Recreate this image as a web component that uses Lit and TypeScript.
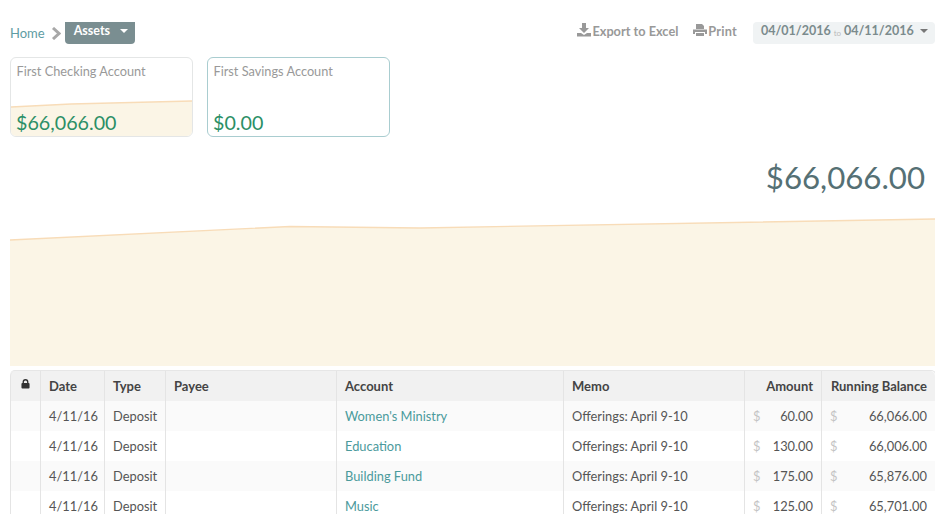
import { LitElement, html, css, svg } from "lit";
import { customElement } from "lit/decorators.js";

const rows = [
  ["Women's Ministry", "60.00", "66,066.00"],
  ["Education", "130.00", "66,006.00"],
  ["Building Fund", "175.00", "65,876.00"],
  ["Music", "125.00", "65,701.00"],
];

@customElement("app-root")
export class AppRoot extends LitElement {
  static styles = css`
    :host { display: block; height: 526px; overflow: hidden; background: #fff; font-family: Lato, "Open Sans", sans-serif; font-size: 14px; color: #555; }
    .page { padding: 22px 14px 0 10px; display: flex; flex-direction: column; }
    .top { display: flex; align-items: flex-start; justify-content: space-between; height: 35px; }
    .crumbs { display: flex; align-items: flex-start; }
    .home { color: #5e9ca3; font-size: 13px; line-height: 22px; height: 22px; display: flex; align-items: flex-end; }
    .sep { margin: 5px 4px 0 6px; }
    .assets { width: 70px; height: 22px; box-sizing: border-box; background: #7a8e91; color: #fff; font-weight: 700; font-size: 12.5px; border-radius: 0 0 4px 4px; padding: 0 0 0 9px; display: flex; align-items: flex-start; line-height: 18px; gap: 10px; }
    .caret { width: 0; height: 0; border-left: 4px solid transparent; border-right: 4px solid transparent; border-top: 4px solid currentColor; }
    .assets .caret { margin-top: 7px; }
    .tools { display: flex; align-items: flex-start; color: #999; font-weight: 700; font-size: 12.75px; line-height: 18px; }
    .tool { display: flex; align-items: flex-start; gap: 1px; }
    .tool svg { margin-top: 1px; }
    .export { margin-right: 15px; }
    .print { letter-spacing: 0.2px; }
    .dates { margin-left: 16px; width: 182px; height: 22px; box-sizing: border-box; background: #f0f3f4; color: #7b8b8d; border-radius: 4px; padding: 0 0 0 8px; display: flex; align-items: flex-start; font-size: 12.5px; }
    .to { font-size: 8px; font-weight: 400; color: #bbb; margin: 2px 3px 0; }
    .dates .caret { margin: 7px 0 0 6px; color: #777; }
    .cards { display: flex; gap: 14px; }
    .card { position: relative; width: 183px; height: 80px; box-sizing: border-box; border: 1px solid #e4e6e6; border-radius: 6px; overflow: hidden; }
    .card.sav { border-color: #a9cdd0; }
    .card svg { position: absolute; inset: 0; }
    .name { position: relative; color: #999; font-size: 12.75px; line-height: 18px; padding: 4px 0 0 5.5px; }
    .bal { position: absolute; left: 5px; bottom: 0; color: #2b8f66; font-size: 19.7px; line-height: 26px; }
    .total { text-align: right; color: #557074; font-size: 31.2px; font-weight: 400; line-height: 40px; padding: 20px 10px 0 0; height: 40px; }
    .chart { display: block; margin-top: 21px; }
    .wrap { margin-top: 4px; height: 144px; overflow: hidden; }
    table { width: 925px; box-sizing: border-box; table-layout: fixed; border-collapse: separate; border-spacing: 0; font-size: 12.85px; border-top: 1px solid #e6e6e6; border-right: 1px solid #e6e6e6; border-radius: 5px 5px 0 0; }
    th, td { height: 30px; box-sizing: border-box; padding: 0 8px; border-left: 1px solid #e4e4e4; white-space: nowrap; text-align: left; }
    th { background: #f1f1f1; color: #444; font-weight: 700; font-size: 13px; }
    th:first-child { border-top-left-radius: 5px; padding: 0; text-align: center; vertical-align: top; }
    th:last-child { border-top-right-radius: 5px; }
    tbody tr:nth-child(odd) td { background: #fafafa; }
    td { color: #555; }
    td a { color: #4b9a9c; }
    .r { text-align: right; }
    .money { display: flex; justify-content: space-between; }
    .d { color: #c4c4c4; }
    .lock { margin-top: 8px; }
  `;

  render() {
    return html`<div class="page">
      <div class="top">
        <div class="crumbs">
          <span class="home">Home</span>
          <svg class="sep" width="10" height="13" viewBox="0 0 10 13"><path d="M2 1l6 5.500L2 12" fill="none" stroke="#a8a8a8" stroke-width="3"/></svg>
          <div class="assets">Assets <span class="caret"></span></div>
        </div>
        <div class="tools">
          <span class="tool export"><svg width="14" height="14" viewBox="0 0 14 14" fill="#999"><path d="M5 0h4v5h3L7 10 2 5h3z"/><path d="M0 10h4l3 2 3-2h4v3.500H0z"/></svg>Export to Excel</span>
          <span class="tool print"><svg width="14" height="14" viewBox="0 0 14 14" fill="#999"><path d="M3 1h6l2 2v3H3z"/><path d="M0 6.500h14V11h-2V9H2v2H0z"/><path d="M3 10h8v3H3z"/></svg>Print</span>
          <div class="dates">04/01/2016<span class="to">to</span>04/11/2016<span class="caret"></span></div>
        </div>
      </div>
      <div class="cards">
        <div class="card">
          <svg width="181" height="78" viewBox="0 0 181 78" preserveAspectRatio="none">${svg`<path d="M0 49 L60 46 L181 43 V78 H0Z" fill="#fbf5e6"/><path d="M0 49 L60 46 L181 43" fill="none" stroke="#f8dcb8" stroke-width="1.300"/>`}</svg>
          <div class="name">First Checking Account</div>
          <div class="bal">$66,066.00</div>
        </div>
        <div class="card sav">
          <div class="name">First Savings Account</div>
          <div class="bal">$0.00</div>
        </div>
      </div>
      <div class="total">$66,066.00</div>
      <svg class="chart" width="925" height="148" viewBox="0 0 925 148">${svg`<path d="M0 22 L280 8.500 L410 10 L925 1 V148 H0Z" fill="#fbf5e6"/><path d="M0 22 L280 8.500 L410 10 L925 1" fill="none" stroke="#f8dcb8" stroke-width="1.300"/>`}</svg>
      <div class="wrap">
        <table>
          <colgroup><col style="width:30px"/><col style="width:64px"/><col style="width:61px"/><col style="width:171px"/><col style="width:227px"/><col style="width:181px"/><col style="width:77px"/><col style="width:114px"/></colgroup>
          <thead><tr>
            <th><svg class="lock" width="9" height="10" viewBox="0 0 10 11"><path d="M2.500 5V3.300a2.500 2.500 0 0 1 5 0V5" fill="none" stroke="#333" stroke-width="1.500"/><rect x="0.500" y="4.500" width="9" height="6" rx="1" fill="#333"/></svg></th>
            <th>Date</th><th>Type</th><th>Payee</th><th>Account</th><th>Memo</th><th class="r">Amount</th><th class="r">Running Balance</th>
          </tr></thead>
          <tbody>
            ${rows.map((r) => html`<tr>
              <td></td><td>4/11/16</td><td>Deposit</td><td></td>
              <td><a>${r[0]}</a></td><td>Offerings: April 9-10</td>
              <td><div class="money"><span class="d">$</span><span>${r[1]}</span></div></td>
              <td><div class="money"><span class="d">$</span><span>${r[2]}</span></div></td>
            </tr>`)}
          </tbody>
        </table>
      </div>
    </div>`;
  }
}
